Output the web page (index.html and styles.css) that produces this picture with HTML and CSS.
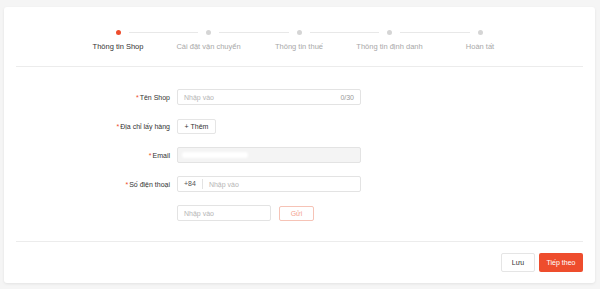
FILE: index.html
```html
<!DOCTYPE html>
<html lang="vi">
<head>
<meta charset="utf-8">
<link rel="stylesheet" href="styles.css">
</head>
<body>
<div class="card">
  <div class="steps">
    <div class="step active first"><div class="track"><span class="ln"></span><span class="dot"></span><span class="ln"></span></div><div class="lbl">Thông tin Shop</div></div>
    <div class="step"><div class="track"><span class="ln"></span><span class="dot"></span><span class="ln"></span></div><div class="lbl">Cài đặt vận chuyển</div></div>
    <div class="step"><div class="track"><span class="ln"></span><span class="dot"></span><span class="ln"></span></div><div class="lbl">Thông tin thuế</div></div>
    <div class="step"><div class="track"><span class="ln"></span><span class="dot"></span><span class="ln"></span></div><div class="lbl">Thông tin định danh</div></div>
    <div class="step last"><div class="track"><span class="ln"></span><span class="dot"></span><span class="ln"></span></div><div class="lbl">Hoàn tất</div></div>
  </div>
  <div class="divider"></div>
  <div class="form">
    <div class="row">
      <div class="label"><span class="req">*</span>Tên Shop</div>
      <div class="input wide"><span class="ph">Nhập vào</span><span class="count">0/30</span></div>
    </div>
    <div class="row">
      <div class="label"><span class="req">*</span>Địa chỉ lấy hàng</div>
      <div class="btn add">+ Thêm</div>
    </div>
    <div class="row">
      <div class="label"><span class="req">*</span>Email</div>
      <div class="input wide disabled"><span class="blob"></span></div>
    </div>
    <div class="row">
      <div class="label"><span class="req">*</span>Số điện thoại</div>
      <div class="input wide"><span class="prefix">+84</span><span class="ph">Nhập vào</span></div>
    </div>
    <div class="row">
      <div class="label"></div>
      <div class="input short"><span class="ph">Nhập vào</span></div>
      <div class="btn send">Gửi</div>
    </div>
  </div>
  <div class="divider bottom"></div>
  <div class="actions">
    <div class="btn save">Lưu</div>
    <div class="btn next">Tiếp theo</div>
  </div>
</div>
</body>
</html>
```
FILE: styles.css
```css
* { box-sizing: border-box; }
html, body { margin: 0; padding: 0; }
body {
  background: #f5f5f5;
  font-family: "Liberation Sans", Arial, sans-serif;
  color: #333;
  padding: 7px 5px 6px 4px;
}
.card {
  background: #fff;
  border-radius: 3px;
  box-shadow: 0 1px 3px rgba(0,0,0,0.08);
  width: 591px;
  height: 276px;
  padding: 0 12px;
  display: flex;
  flex-direction: column;
}
.steps {
  display: flex;
  justify-content: center;
  padding-top: 22px;
  margin-left: -1px;
}
.step {
  width: 90.5px;
  display: flex;
  flex-direction: column;
  align-items: center;
}
.track {
  display: flex;
  align-items: center;
  width: 100%;
  height: 6px;
}
.ln {
  flex: 1;
  height: 1px;
  background: #e8e8e8;
}
.first .ln:first-child, .last .ln:last-child { background: transparent; }
.dot {
  width: 5px;
  height: 5px;
  border-radius: 50%;
  background: #d5d5d5;
  margin: 0 8px;
}
.active .dot { background: #ee4d2d; }
.lbl {
  margin-top: 7px;
  font-size: 7.5px;
  color: #a8a8a8;
  white-space: nowrap;
  line-height: 10px;
}
.active .lbl { color: #333; }
.divider {
  height: 1px;
  background: #ececec;
  margin-top: 14px;
}
.form {
  display: flex;
  flex-direction: column;
  gap: 13px;
  padding-top: 22px;
}
.row {
  display: flex;
  align-items: center;
  height: 16px;
}
.label {
  width: 154px;
  margin-right: 7px;
  text-align: right;
  font-size: 7px;
  color: #333;
}
.req { color: #ee4d2d; margin-right: 1px; }
.input {
  height: 16px;
  border: 1px solid #e3e3e3;
  border-radius: 2px;
  display: flex;
  align-items: center;
  padding: 0 6px;
  font-size: 7px;
}
.wide { width: 184px; }
.short { width: 94px; }
.ph { color: #b5b5b5; flex: 1; }
.count { color: #999; }
.disabled { background: #f4f4f4; }
.blob {
  width: 66px;
  height: 6px;
  background: #fff;
  border-radius: 3px;
  filter: blur(1px);
  margin-left: -2px;
}
.prefix {
  color: #555;
  padding-right: 6px;
  margin-right: 6px;
  border-right: 1px solid #e3e3e3;
  line-height: 10px;
}
.btn {
  display: flex;
  align-items: center;
  justify-content: center;
  border-radius: 2px;
  font-size: 7px;
  white-space: nowrap;
}
.add {
  width: 39px;
  height: 15px;
  border: 1px solid #e5e5e5;
  color: #333;
}
.send {
  width: 35px;
  height: 15px;
  margin-left: 8px;
  border: 1px solid #f6c3b6;
  color: #f4a28e;
}
.bottom { margin-top: 20px; }
.actions {
  display: flex;
  justify-content: flex-end;
  gap: 4px;
  padding-top: 11px;
}
.save {
  width: 34px;
  height: 19px;
  border: 1px solid #e5e5e5;
  color: #333;
}
.next {
  width: 44px;
  height: 19px;
  background: #ee4d2d;
  color: #fff;
}
```
